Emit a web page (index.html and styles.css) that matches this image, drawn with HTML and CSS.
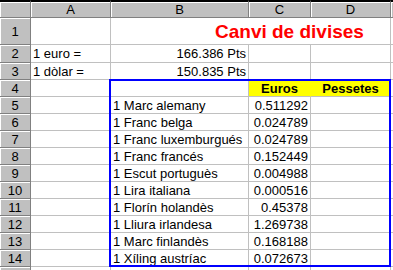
FILE: index.html
```html
<!DOCTYPE html>
<html>
<head>
<meta charset="utf-8">
<link rel="stylesheet" href="styles.css">
</head>
<body>
<div class="sheet">
  <div class="h top corner"></div>
  <div class="h top">A</div>
  <div class="h top">B</div>
  <div class="h top">C</div>
  <div class="h top">D</div>
  <div class="h top edge"></div>

  <div class="h rh">1</div>
  <div class="c"></div>
  <div class="c title">Canvi de divises</div>
  <div class="c e"></div>

  <div class="h rh">2</div>
  <div class="c">1 euro =</div>
  <div class="c num">166.386 Pts</div>
  <div class="c"></div>
  <div class="c"></div>
  <div class="c e"></div>

  <div class="h rh">3</div>
  <div class="c">1 dòlar =</div>
  <div class="c num">150.835 Pts</div>
  <div class="c"></div>
  <div class="c"></div>
  <div class="c e"></div>

  <div class="h rh">4</div>
  <div class="c"></div>
  <div class="c"></div>
  <div class="c yel">Euros</div>
  <div class="c yel">Pessetes</div>
  <div class="c e"></div>

  <div class="h rh">5</div><div class="c"></div><div class="c">1 Marc alemany</div><div class="c num">0.511292</div><div class="c"></div><div class="c e"></div>
  <div class="h rh">6</div><div class="c"></div><div class="c">1 Franc belga</div><div class="c num">0.024789</div><div class="c"></div><div class="c e"></div>
  <div class="h rh">7</div><div class="c"></div><div class="c">1 Franc luxemburgués</div><div class="c num">0.024789</div><div class="c"></div><div class="c e"></div>
  <div class="h rh">8</div><div class="c"></div><div class="c">1 Franc francés</div><div class="c num">0.152449</div><div class="c"></div><div class="c e"></div>
  <div class="h rh">9</div><div class="c"></div><div class="c">1 Escut portuguès</div><div class="c num">0.004988</div><div class="c"></div><div class="c e"></div>
  <div class="h rh">10</div><div class="c"></div><div class="c">1 Lira italiana</div><div class="c num">0.000516</div><div class="c"></div><div class="c e"></div>
  <div class="h rh">11</div><div class="c"></div><div class="c">1 Florín holandès</div><div class="c num">0.45378</div><div class="c"></div><div class="c e"></div>
  <div class="h rh">12</div><div class="c"></div><div class="c">1 Lliura irlandesa</div><div class="c num">1.269738</div><div class="c"></div><div class="c e"></div>
  <div class="h rh">13</div><div class="c"></div><div class="c">1 Marc finlandès</div><div class="c num">0.168188</div><div class="c"></div><div class="c e"></div>
  <div class="h rh">14</div><div class="c"></div><div class="c">1 Xíling austríac</div><div class="c num">0.072673</div><div class="c"></div><div class="c e"></div>
  <div class="h rh"></div><div class="c"></div><div class="c"></div><div class="c"></div><div class="c"></div><div class="c e"></div>

  <div class="range"></div>
</div>
</body>
</html>
```

FILE: styles.css
```css
html, body {
  margin: 0;
  padding: 0;
  background: #fff;
  overflow: hidden;
}

body {
  font-family: "Liberation Sans", Arial, sans-serif;
  font-size: 13px;
  color: #000;
}

.sheet {
  position: relative;
  display: grid;
  grid-template-columns: 31px 80px 138px 62px 80px 2px;
  grid-template-rows: 18px 27px 18px repeat(13, 17px);
  width: 393px;
  height: 270px;
  overflow: hidden;
}

.c, .h {
  box-sizing: border-box;
  display: flex;
  align-items: center;
  white-space: nowrap;
  overflow: hidden;
  line-height: 1;
  min-width: 0;
}

.c {
  border-right: 1px solid #c0c0c0;
  border-bottom: 1px solid #c0c0c0;
  padding: 0 2px;
}

.h {
  background: #c0c0c0;
  border-right: 1px solid #808080;
  border-bottom: 1px solid #808080;
  box-shadow: inset 1px 1px 0 #fff;
  justify-content: center;
}

.h.top {
  border-top: 2px solid #000;
}

.h.edge {
  border-right: none;
}

.c.e {
  border-right: none;
}

.num {
  justify-content: flex-end;
}

.title {
  grid-column: 3 / 6;
  padding-left: 104px;
  color: #ff0000;
  font-weight: bold;
  font-size: 19px;
}

.yel {
  background: #ffff00;
  border-right-color: #ffff00;
  justify-content: center;
  font-weight: bold;
}

.range {
  position: absolute;
  grid-column: 3 / 6;
  grid-row: 5 / 16;
  top: -1px;
  left: -2px;
  right: 0;
  bottom: 0;
  box-sizing: border-box;
  border: 2px solid #0000ff;
  pointer-events: none;
  z-index: 2;
}
```
